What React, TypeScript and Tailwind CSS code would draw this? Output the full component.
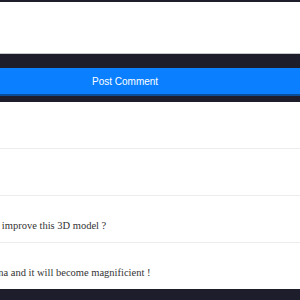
export default function App() {
  return (
    <div className="w-[300px] h-[300px] overflow-hidden bg-[#1e1d2c] flex flex-col">
      <div className="h-[2px] shrink-0" />
      <div className="h-[52px] shrink-0 bg-white border-b border-[#c8c8cc]" />
      <div className="h-[14px] shrink-0" />
      <button className="h-[28px] shrink-0 bg-[#0a7fff] border-b-2 border-[#0b4f9a] text-white text-[10px] text-left pl-[92px] font-['Liberation_Sans',Arial,sans-serif]">
        Post Comment
      </button>
      <div className="h-[6px] shrink-0" />
      <div className="h-[187px] shrink-0 bg-white flex flex-col font-['Liberation_Serif','Times_New_Roman',serif] text-[10.5px] text-[#333]">
        <div className="h-[47px] shrink-0 border-b border-[#ececec]" />
        <div className="h-[47px] shrink-0 border-b border-[#ececec]" />
        <div className="h-[47px] shrink-0 border-b border-[#ececec] overflow-hidden whitespace-nowrap pt-[22px]">
          <span className="ml-[-76px]">Which details can improve this 3D model ?</span>
        </div>
        <div className="h-[47px] shrink-0 overflow-hidden whitespace-nowrap pt-[22px]">
          <span className="ml-[-63px]">Add some patina and it will become magnificient !</span>
        </div>
      </div>
    </div>
  );
}
